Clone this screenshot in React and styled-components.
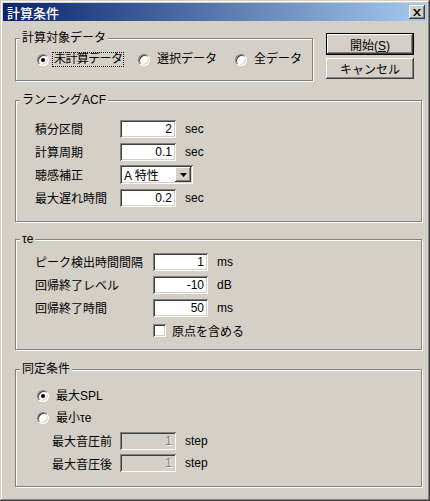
import React from "react";
import styled, { createGlobalStyle } from "styled-components";

const GlobalStyle = createGlobalStyle`
  html, body {
    margin: 0;
    padding: 0;
    background: #d4d0c8;
  }
  body {
    font-family: "Liberation Sans", "Noto Sans CJK JP", sans-serif;
    font-size: 12px;
    color: #000;
  }
`;

const raised = `
  box-shadow: inset -1px -1px #404040, inset 1px 1px #ffffff,
    inset -2px -2px #808080, inset 2px 2px #d4d0c8;
`;

const sunken = `
  box-shadow: inset 1px 1px #808080, inset -1px -1px #ffffff,
    inset 2px 2px #404040, inset -2px -2px #d4d0c8;
`;

const Window = styled.div`
  width: 430px;
  height: 501px;
  box-sizing: border-box;
  background: #d4d0c8;
  box-shadow: inset -1px -1px #404040, inset 1px 1px #d4d0c8,
    inset -2px -2px #808080, inset 2px 2px #ffffff;
  display: flex;
  flex-direction: column;
  overflow: hidden;
`;

const TitleBar = styled.div`
  margin: 3px 3px 0 3px;
  height: 18px;
  padding: 0 2px 0 4px;
  display: flex;
  align-items: center;
  justify-content: space-between;
  background: linear-gradient(to right, #0a246a, #a6caf0);
  color: #fff;
  font-weight: 500;
  font-size: 13px;
`;

const CloseBtn = styled.div`
  width: 16px;
  height: 14px;
  background: #d4d0c8;
  display: flex;
  align-items: center;
  justify-content: center;
  ${raised}
`;

const Body = styled.div`
  padding: 12px 8px 0 15px;
  display: flex;
  flex-direction: column;
`;

const TopRow = styled.div`
  display: flex;
  align-items: flex-start;
`;

const ButtonCol = styled.div`
  margin-left: 13px;
  display: flex;
  flex-direction: column;
  gap: 3px;
`;

const Button = styled.button`
  width: 88px;
  height: ${(p) => (p.$default ? "22px" : "21px")};
  box-sizing: border-box;
  padding: 0;
  font: inherit;
  color: #000;
  background: #d4d0c8;
  border: ${(p) => (p.$default ? "1px solid #000" : "none")};
  ${raised}
`;

const Group = styled.div`
  position: relative;
  box-sizing: border-box;
  width: ${(p) => p.$w || "407px"};
  height: ${(p) => p.$h};
  margin-top: ${(p) => p.$mt || "0"};
  padding: ${(p) => p.$pt || "0"} 0 0 ${(p) => p.$pl || "19px"};
  border: 1px solid #808080;
  box-shadow: inset 1px 1px #ffffff, 1px 1px #ffffff;
`;

const Caption = styled.span`
  position: absolute;
  top: -8px;
  left: 4px;
  padding: 0 2px;
  line-height: 14px;
  background: #d4d0c8;
`;

const Row = styled.div`
  display: flex;
  align-items: center;
  height: ${(p) => p.$h || "23px"};
  padding-left: ${(p) => p.$indent || "0"};
`;

const Label = styled.span`
  width: ${(p) => p.$w};
  flex-shrink: 0;
  white-space: nowrap;
`;

const Field = styled.input`
  width: ${(p) => p.$w || "56px"};
  height: 18px;
  box-sizing: border-box;
  border: none;
  outline: none;
  padding: 0 4px 0 2px;
  margin: 0;
  font: inherit;
  text-align: right;
  background: ${(p) => (p.disabled ? "#d4d0c8" : "#fff")};
  color: ${(p) => (p.disabled ? "#808080" : "#000")};
  text-shadow: ${(p) => (p.disabled ? "1px 1px #fff" : "none")};
  ${sunken}
`;

const Unit = styled.span`
  margin-left: 9px;
`;

const Combo = styled.div`
  width: 73px;
  height: 19px;
  box-sizing: border-box;
  padding: 2px;
  display: flex;
  align-items: center;
  background: #fff;
  ${sunken}
`;

const ComboText = styled.span`
  flex: 1;
  padding-left: 2px;
`;

const DropBtn = styled.div`
  width: 16px;
  height: 15px;
  background: #d4d0c8;
  display: flex;
  align-items: center;
  justify-content: center;
  ${raised}
`;

const RadioItem = styled.label`
  display: flex;
  align-items: center;
  width: ${(p) => p.$w || "auto"};
`;

const RadioDot = styled.span`
  position: relative;
  width: 12px;
  height: 12px;
  box-sizing: border-box;
  border-radius: 50%;
  background: #fff;
  border: 1px solid;
  border-color: #808080 #ffffff #ffffff #808080;
  box-shadow: inset 1px 1px #404040, inset -1px -1px #d4d0c8;
  flex-shrink: 0;

  &::after {
    content: "";
    display: ${(p) => (p.$checked ? "block" : "none")};
    position: absolute;
    left: 3px;
    top: 3px;
    width: 4px;
    height: 4px;
    border-radius: 50%;
    background: #000;
  }
`;

const RadioText = styled.span`
  margin-left: ${(p) => p.$gap || "5px"};
  padding: 0 1px;
  line-height: 13px;
  letter-spacing: ${(p) => p.$tight || "0"};
  border: 1px dotted ${(p) => (p.$focus ? "#000" : "transparent")};
  white-space: nowrap;
`;

const CheckBox = styled.span`
  width: 13px;
  height: 13px;
  box-sizing: border-box;
  background: #fff;
  ${sunken}
`;

const CheckText = styled.span`
  margin-left: 6px;
`;

const CloseIcon = () => (
  <svg width="8" height="7" viewBox="0 0 8 7">
    <path d="M0 0h2l2 2.5L6 0h2L5 3.5 8 7H6L4 4.5 2 7H0l3-3.5z" fill="#000" />
  </svg>
);

const ArrowIcon = () => (
  <svg width="7" height="4" viewBox="0 0 7 4">
    <path d="M0 0h7L3.5 4z" fill="#000" />
  </svg>
);

function App() {
  return (
    <>
      <GlobalStyle />
      <Window>
        <TitleBar>
          計算条件
          <CloseBtn>
            <CloseIcon />
          </CloseBtn>
        </TitleBar>

        <Body>
          <TopRow>
            <Group $w="298px" $h="43px" $mt="5px" $pt="12px" $pl="21px">
              <Caption>計算対象データ</Caption>
              <Row $h="17px">
                <RadioItem $w="101px">
                  <RadioDot $checked />
                  <RadioText $gap="3px" $tight="-0.6px" $focus>
                    未計算データ
                  </RadioText>
                </RadioItem>
                <RadioItem $w="97px">
                  <RadioDot />
                  <RadioText>選択データ</RadioText>
                </RadioItem>
                <RadioItem>
                  <RadioDot />
                  <RadioText>全データ</RadioText>
                </RadioItem>
              </Row>
            </Group>
            <ButtonCol>
              <Button $default>
                開始(<u>S</u>)
              </Button>
              <Button>キャンセル</Button>
            </ButtonCol>
          </TopRow>

          <Group $h="122px" $mt="19px" $pt="16px">
            <Caption>ランニングACF</Caption>
            <Row>
              <Label $w="85px">積分区間</Label>
              <Field defaultValue="2" />
              <Unit>sec</Unit>
            </Row>
            <Row>
              <Label $w="85px">計算周期</Label>
              <Field defaultValue="0.1" />
              <Unit>sec</Unit>
            </Row>
            <Row>
              <Label $w="85px">聴感補正</Label>
              <Combo>
                <ComboText>A 特性</ComboText>
                <DropBtn>
                  <ArrowIcon />
                </DropBtn>
              </Combo>
            </Row>
            <Row>
              <Label $w="85px">最大遅れ時間</Label>
              <Field defaultValue="0.2" />
              <Unit>sec</Unit>
            </Row>
          </Group>

          <Group $h="111px" $mt="17px" $pt="10px">
            <Caption>τe</Caption>
            <Row>
              <Label $w="118px">ピーク検出時間間隔</Label>
              <Field $w="55px" defaultValue="1" />
              <Unit>ms</Unit>
            </Row>
            <Row>
              <Label $w="118px">回帰終了レベル</Label>
              <Field $w="55px" defaultValue="-10" />
              <Unit>dB</Unit>
            </Row>
            <Row>
              <Label $w="118px">回帰終了時間</Label>
              <Field $w="55px" defaultValue="50" />
              <Unit>ms</Unit>
            </Row>
            <Row $indent="118px">
              <CheckBox />
              <CheckText>原点を含める</CheckText>
            </Row>
          </Group>

          <Group $h="118px" $mt="19px" $pt="15px" $pl="21px">
            <Caption>同定条件</Caption>
            <Row $h="22px">
              <RadioItem>
                <RadioDot $checked />
                <RadioText>最大SPL</RadioText>
              </RadioItem>
            </Row>
            <Row $h="22px">
              <RadioItem>
                <RadioDot />
                <RadioText>最小τe</RadioText>
              </RadioItem>
            </Row>
            <Row $h="23px" $indent="15px">
              <Label $w="68px">最大音圧前</Label>
              <Field disabled defaultValue="1" />
              <Unit>step</Unit>
            </Row>
            <Row $h="22px" $indent="15px">
              <Label $w="68px">最大音圧後</Label>
              <Field disabled defaultValue="1" />
              <Unit>step</Unit>
            </Row>
          </Group>
        </Body>
      </Window>
    </>
  );
}

export default App;
